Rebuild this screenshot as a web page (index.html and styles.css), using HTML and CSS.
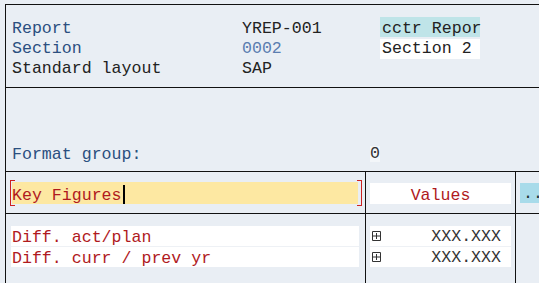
FILE: index.html
```html
<!DOCTYPE html>
<html>
<head>
<meta charset="utf-8">
<link rel="stylesheet" href="styles.css">
</head>
<body>
<div class="frame">
  <section class="head">
    <div class="row"><span class="c1 lbl">Report</span><span class="c2">YREP-001</span><span class="c3 cyan">cctr Repor</span></div>
    <div class="row"><span class="c1 lbl">Section</span><span class="c2 num">0002</span><span class="c3 white">Section 2</span></div>
    <div class="row"><span class="c1">Standard layout</span><span class="c2">SAP</span></div>
  </section>
  <section class="fmt">
    <div class="row"><span class="c1f lbl">Format group:</span><span class="zero">0</span></div>
  </section>
  <section class="thead">
    <div class="cell k">
      <div class="keyfield"><span class="red">Key Figures</span><span class="cursor"></span></div>
    </div>
    <div class="cell v">
      <div class="valfield red">Values</div>
    </div>
    <div class="cell m">
      <div class="more">...</div>
    </div>
  </section>
  <section class="tbody">
    <div class="col k">
      <div class="trow red">Diff. act/plan</div>
      <div class="trow red">Diff. curr / prev yr</div>
    </div>
    <div class="col v">
      <div class="trow vrow"><svg class="ico" width="9" height="10" viewBox="0 0 9 10"><path d="M0.5 0.5V9.5M0.5 0.5H8.5V9.5H0.5M0.5 5H8.5M4.5 2V8" stroke="#333" stroke-width="1" fill="none"/></svg><span>XXX.XXX</span></div>
      <div class="trow vrow"><svg class="ico" width="9" height="10" viewBox="0 0 9 10"><path d="M0.5 0.5V9.5M0.5 0.5H8.5V9.5H0.5M0.5 5H8.5M4.5 2V8" stroke="#333" stroke-width="1" fill="none"/></svg><span>XXX.XXX</span></div>
    </div>
    <div class="col m"></div>
  </section>
</div>
</body>
</html>
```
FILE: styles.css
```css
html, body {
  margin: 0;
  padding: 0;
  background: #e9eef4;
  height: 283px;
  overflow: hidden;
}
body {
  font-family: "Liberation Mono", "Courier New", monospace;
  font-size: 16.6px;
  color: #222;
}
.frame {
  margin: 4px 0 0 5px;
  border-left: 1px solid #111;
  border-top: 1px solid #111;
}
.head {
  height: 68px;
  padding: 14px 0 0 0;
  border-bottom: 1px solid #111;
}
.row {
  display: flex;
  height: 20px;
  line-height: 20px;
  white-space: nowrap;
}
.c1 { width: 230px; padding-left: 6px; }
.c2 { width: 138px; }
.c3 { width: 98px; padding-left: 2px; }
.head .row:first-child .c3 { height: 20px; margin-top: -2px; line-height: 24px; }
.lbl { color: #2b4f7f; }
.num { color: #5a7db0; }
.cyan { background: #bfe4e8; }
.white { background: #ffffff; }
.fmt {
  height: 84px;
  padding-top: 57px;
  box-sizing: border-box;
  border-bottom: 1px solid #111;
}
.c1f { width: 358px; padding-left: 6px; }
.zero {
  background: #f3f6f9;
  width: 10px;
  height: 16px;
  line-height: 16px;
  margin-top: 1px;
  color: #333;
}
.thead {
  display: flex;
  height: 41px;
  border-bottom: 1px solid #111;
}
.cell { box-sizing: border-box; }
.k { width: 360px; border-right: 1px solid #111; }
.v { width: 150px; border-right: 1px solid #111; }
.m { flex: 1; }
.thead .k { padding: 10px 0 0 6px; }
.keyfield {
  position: relative;
  width: 346px;
  height: 22px;
  line-height: 27px;
  background: #fde8a2;
  white-space: nowrap;
}
.keyfield::before, .keyfield::after {
  content: "";
  position: absolute;
  top: -2px;
  width: 4px;
  height: 24px;
  border: 1.5px solid #c22;
}
.keyfield::before { left: -2px; border-right: none; }
.keyfield::after { right: -4px; border-left: none; }
.cursor {
  display: inline-block;
  width: 2px;
  height: 19px;
  background: #000;
  margin-left: 1px;
  vertical-align: -4px;
}
.red { color: #b01a1e; }
.thead .v { padding: 11px 0 0 4px; }
.valfield {
  width: 141px;
  height: 21px;
  line-height: 25px;
  background: #fff;
  text-align: center;
}
.thead .m { padding: 11px 0 0 4px; overflow: hidden; }
.more {
  width: 30px;
  height: 20px;
  line-height: 22px;
  background: #a8dbea;
  padding-left: 3px;
  color: #233;
}
.tbody {
  display: flex;
  height: 80px;
}
.tbody .k { padding: 12px 0 0 5px; box-sizing: border-box; }
.tbody .v { padding: 12px 0 0 4px; box-sizing: border-box; }
.trow {
  height: 20px;
  line-height: 23px;
  background: #fff;
  white-space: nowrap;
  padding-left: 1px;
  width: 348px;
  box-sizing: border-box;
}
.trow + .trow { border-top: 1px solid #eef1f5; height: 21px; }
.tbody .v .trow { width: 141px; }
.vrow {
  display: flex;
  align-items: center;
  justify-content: space-between;
  padding: 0 10px 0 2px !important;
  color: #333;
}
```
